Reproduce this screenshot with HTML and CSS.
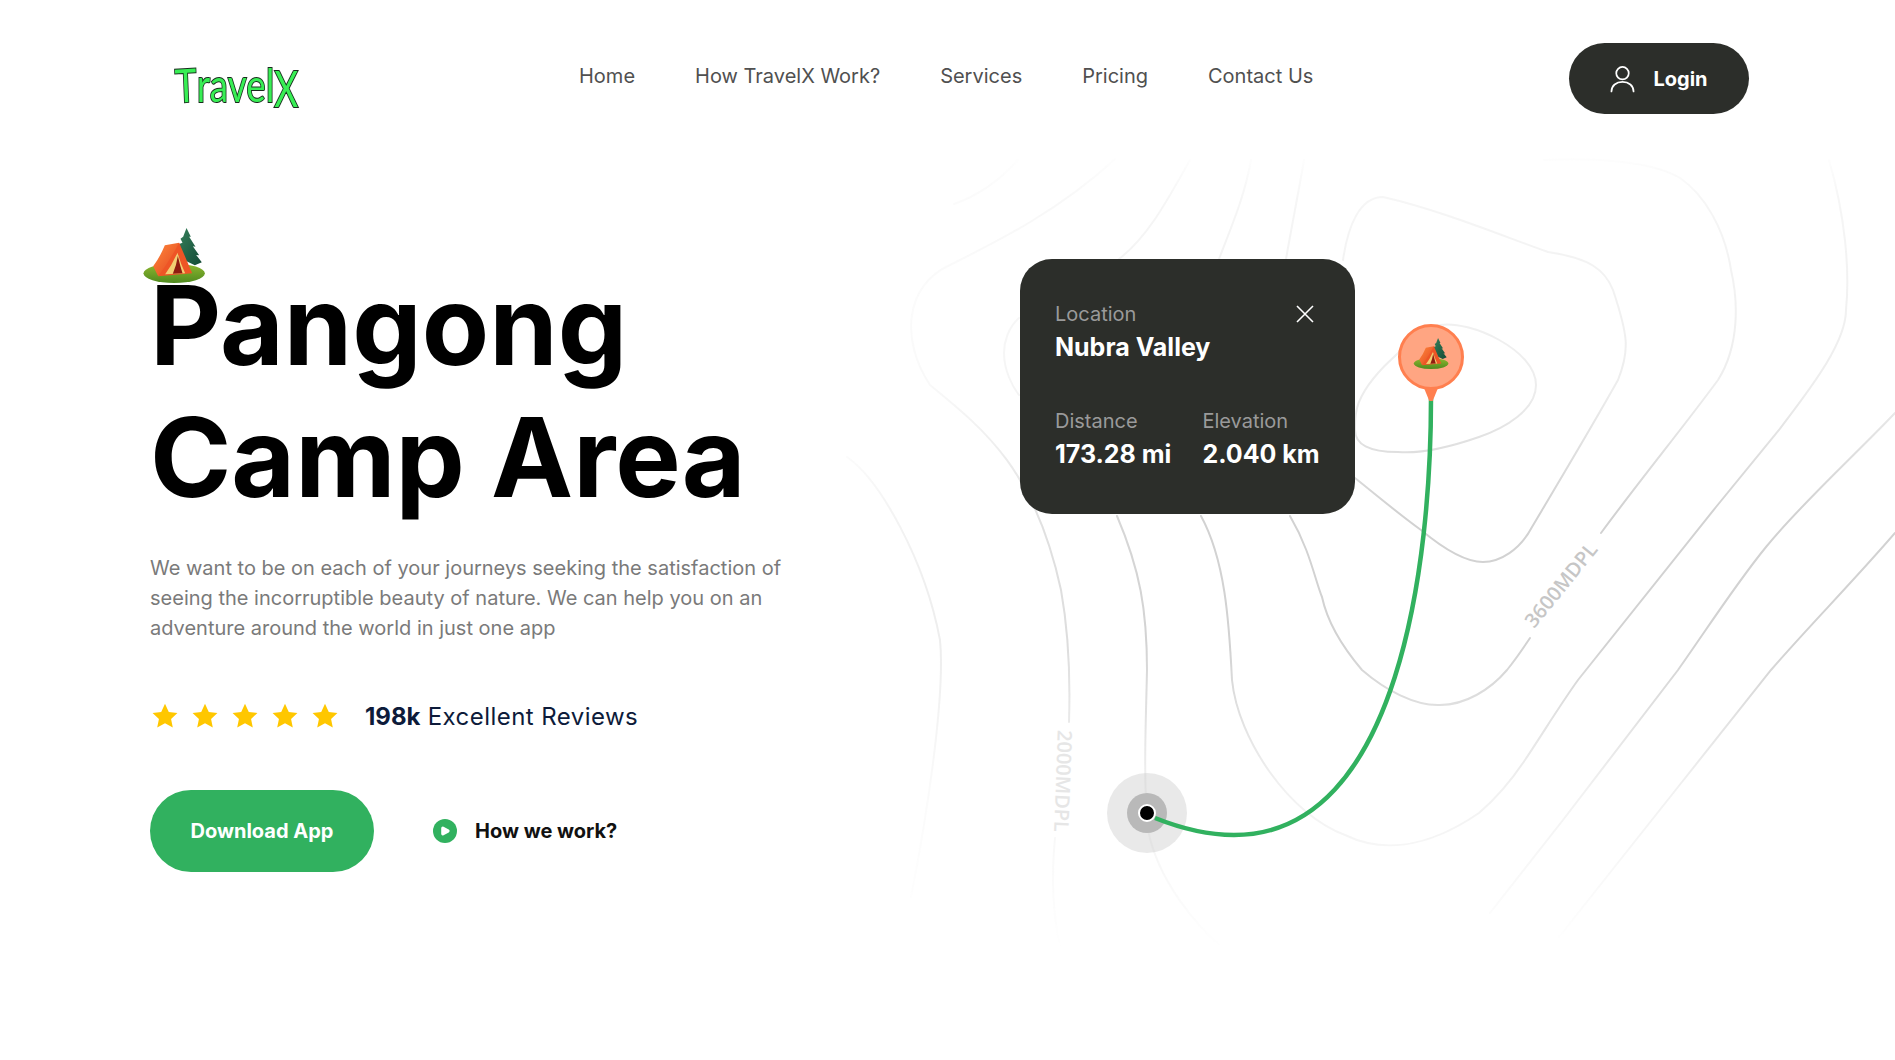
FILE: index.html
```html
<!DOCTYPE html>
<html lang="en">
<head>
<meta charset="utf-8">
<title>TravelX</title>
<link rel="stylesheet" href="styles.css">
</head>
<body>
<svg class="defs" width="0" height="0" aria-hidden="true">
  <defs>
    <linearGradient id="ground" x1="0" y1="0" x2="0" y2="1"><stop offset="0" stop-color="#8fb82f"/><stop offset="1" stop-color="#4f8a1f"/></linearGradient>
    <linearGradient id="tree" x1="0" y1="0" x2="1" y2="1"><stop offset="0" stop-color="#357f5a"/><stop offset="1" stop-color="#134a36"/></linearGradient>
    <linearGradient id="canvas" x1="0" y1="0" x2="1" y2="1"><stop offset="0" stop-color="#ff8a3c"/><stop offset="1" stop-color="#e2421f"/></linearGradient>
    <symbol id="tent" viewBox="40 40 185 165">
      <ellipse cx="133" cy="176" rx="92" ry="29" fill="url(#ground)"/>
      <path d="M170 40L183 66L178 66L197 96L189 95L208 122L199 121L216 143L195 152L150 130L148 88L158 84L152 72L160 66Z" fill="url(#tree)"/>
      <path d="M148 84L105 92Q90 128 70 155L85 185L150 120Z" fill="url(#canvas)"/>
      <path d="M148 84L187 176L85 185Q122 135 148 84Z" fill="#ee5526"/>
      <path d="M143 114Q126 152 106 179L166 176Q152 146 143 114Z" fill="#f2cf73"/>
      <path d="M144 124Q140 152 129 177L158 176Q150 150 144 124Z" fill="#8f1c10"/>
    </symbol>
  </defs>
</svg>

<header class="topbar">
  <a class="logo"><span class="logo-text"><span class="l-t">T</span><span>ravel</span><span class="l-x">X</span></span></a>
  <nav class="nav">
    <a>Home</a>
    <a>How TravelX Work?</a>
    <a>Services</a>
    <a>Pricing</a>
    <a>Contact Us</a>
  </nav>
  <button class="login">
    <svg class="login-icon" viewBox="0 0 26 28" fill="none" stroke="#fff" stroke-width="1.8" stroke-linecap="round"><circle cx="13" cy="8" r="6.5"/><path d="M1.5 27c0-6 5-10 11.500-10s11.500 4 11.500 10"/></svg>
    <span>Login</span>
  </button>
</header>

<main class="hero">
  <section class="copy">
    <svg class="tent-badge"><use href="#tent"/></svg>
    <h1>Pangong<br>Camp Area</h1>
    <p class="lead">We want to be on each of your journeys seeking the satisfaction of seeing the incorruptible beauty of nature. We can help you on an adventure around the world in just one app</p>
    <div class="reviews">
      <div class="stars">
        <svg viewBox="0 0 24 24"><path d="M12 .8l3.500 7.400 8 1-5.900 5.500 1.600 8L12 18.800 4.800 22.700l1.600-8L.5 9.200l8-1z"/></svg>
        <svg viewBox="0 0 24 24"><path d="M12 .8l3.500 7.400 8 1-5.900 5.500 1.600 8L12 18.800 4.800 22.700l1.600-8L.5 9.200l8-1z"/></svg>
        <svg viewBox="0 0 24 24"><path d="M12 .8l3.500 7.400 8 1-5.900 5.500 1.600 8L12 18.800 4.800 22.700l1.600-8L.5 9.200l8-1z"/></svg>
        <svg viewBox="0 0 24 24"><path d="M12 .8l3.500 7.400 8 1-5.900 5.500 1.600 8L12 18.800 4.800 22.700l1.600-8L.5 9.200l8-1z"/></svg>
        <svg viewBox="0 0 24 24"><path d="M12 .8l3.500 7.400 8 1-5.900 5.500 1.600 8L12 18.800 4.800 22.700l1.600-8L.5 9.200l8-1z"/></svg>
      </div>
      <div class="review-text"><b>198k</b> Excellent Reviews</div>
    </div>
    <div class="actions">
      <button class="download">Download App</button>
      <a class="how">
        <svg class="play" viewBox="0 0 24 24"><circle cx="12" cy="12" r="12" fill="#31b15f"/><path d="M9.800 9.200L15 12L9.800 14.800Z" fill="#fff" stroke="#fff" stroke-width="3.200" stroke-linejoin="round"/></svg>
        <span>How we work?</span>
      </a>
    </div>
  </section>

  <section class="map">
    <svg class="contours" viewBox="840 150 1055 800" fill="none" stroke="#d2d2d2" stroke-width="2" stroke-linecap="round">
      <path d="M1356 413C1360 385 1400 345 1440 325C1470 320 1536 350 1536 385C1536 410 1505 428 1479 437C1450 447 1420 454 1398 452C1370 452 1354 445 1355 428C1355 422 1355 418 1356 413Z"/>
      <path d="M1019 318C1008 328 1004 342 1004 353C1004 370 1012 386 1019 395"/>
      <path d="M1355 478C1380 498 1400 515 1421 530C1445 550 1465 562 1483 562C1500 562 1520 550 1532 527C1545 505 1590 430 1618 380C1630 350 1628 335 1613 290C1605 270 1590 258 1548 252C1500 235 1440 210 1383 197C1360 197 1348 225 1343 260"/>
      <path d="M1290 516C1310 550 1315 580 1322 597C1328 625 1345 650 1362 670C1385 690 1415 706 1440 705C1465 705 1490 690 1507 670C1515 660 1522 650 1530 638"/>
      <path d="M1601 533C1640 480 1685 425 1718 380C1740 345 1738 300 1731 270C1725 230 1705 195 1680 178C1650 160 1590 158 1544 160"/>
      <path d="M1201 516C1225 560 1229 620 1232 680C1238 740 1290 815 1345 835C1380 852 1425 850 1479 813C1500 795 1515 775 1525 760C1545 730 1560 705 1578 680L1716 507L1779 430C1805 395 1846 345 1846 310C1850 270 1845 215 1829 160"/>
      <path d="M1117 516C1140 570 1147 610 1147 670C1146 720 1143 780 1148 830C1158 880 1195 925 1225 950"/>
      <path d="M1115 159C1060 210 1000 240 950 265C905 285 900 340 930 385C985 430 1035 470 1061 590C1070 640 1070 690 1069 722"/>
      <path d="M1055 838C1051 880 1053 915 1060 946"/>
      <path d="M847 457C880 480 925 560 940 640C945 690 930 800 911 897"/>
      <path d="M1119 259C1150 235 1170 195 1190 160"/>
      <path d="M1219 259C1232 225 1245 195 1251 160"/>
      <path d="M1286 259C1292 225 1298 195 1304 160"/>
      <path d="M954 204C980 195 1000 180 1018 160"/>
      <path d="M1895 413C1850 460 1800 505 1766 547C1735 585 1705 632 1678 670L1563 820L1490 913"/>
      <path d="M1895 533C1850 585 1810 625 1771 670L1678 787L1559 937"/>
    </svg>
    <span class="tag tag-high">3600MDPL</span>
    <span class="tag tag-low">2000MDPL</span>
    <div class="start"><div class="start-mid"><div class="start-dot"></div></div></div>
    <svg class="route" viewBox="840 150 1055 800" fill="none">
      <path d="M1155 818C1185 830 1210 835 1234 835C1400 835 1431 560 1431 398" stroke="#31b15f" stroke-width="4.500"/>
    </svg>
    <div class="pin"><svg class="pin-tent"><use href="#tent"/></svg></div>
    <div class="pin-tail"></div>
    <article class="card">
      <div class="card-top">
        <div>
          <div class="label">Location</div>
          <div class="value">Nubra Valley</div>
        </div>
        <svg class="close" viewBox="0 0 18 18" fill="none" stroke="#fff" stroke-width="1.600"><path d="M1 1l16 16M17 1L1 17"/></svg>
      </div>
      <div class="card-stats">
        <div><div class="label">Distance</div><div class="value">173.28 mi</div></div>
        <div><div class="label">Elevation</div><div class="value">2.040 km</div></div>
      </div>
    </article>
  </section>
</main>
</body>
</html>
```
FILE: styles.css
```css
* { box-sizing: border-box; }
html, body { margin: 0; padding: 0; }
body {
  width: 1895px;
  height: 1060px;
  overflow: hidden;
  background: #fff;
  font-family: Inter, "Liberation Sans", sans-serif;
  color: #0a0a0a;
}
.defs { position: absolute; }

.topbar {
  display: flex;
  align-items: flex-start;
  height: 150px;
  padding: 43px 146px 0 150px;
}
.logo {
  width: 429px;
  padding: 14px 0 0 25px;
  font-family: Lato, sans-serif;
  font-size: 46px;
  line-height: 56px;
  color: #38ee55;
  -webkit-text-stroke: 2px #17291b;
  paint-order: stroke;
  white-space: nowrap;
}
.logo-text { display: inline-block; transform: scaleX(.8); transform-origin: left center; }
.l-t { display: inline-block; transform: rotate(-3deg); }
.l-x { display: inline-block; transform: translateY(3px) scaleY(1.1); }
.nav {
  display: flex;
  gap: 60px;
  font-size: 20px;
  line-height: 24px;
  color: #505050;
  padding-top: 21px;
}
.login {
  margin-left: auto;
  width: 180px;
  height: 71px;
  border: 0;
  border-radius: 36px;
  background: #2c2e2a;
  color: #fff;
  font: 700 20px Inter, sans-serif;
  display: flex;
  align-items: center;
  justify-content: center;
  gap: 18px;
}
.login-icon { width: 25px; height: 28px; }

.hero { display: flex; height: 800px; }
.copy { position: relative; width: 840px; padding-left: 150px; flex: none; }
.tent-badge { position: absolute; left: 143px; top: 78px; width: 62px; height: 55px; }
h1 {
  margin: 0;
  padding-top: 109px;
  font-size: 110px;
  line-height: 132px;
  font-weight: 700;
  color: #000;
}
.lead {
  margin: 30px 0 0;
  width: 660px;
  font-size: 20px;
  line-height: 30px;
  color: #7a7a7a;
}
.reviews { display: flex; align-items: center; margin-top: 53px; height: 40px; }
.stars { display: flex; gap: 14px; width: 215px; padding-left: 2px; }
.stars svg { width: 26px; height: 26px; fill: #ffc700; flex: none; }
.review-text { font-size: 24px; letter-spacing: .45px; color: #0d1b3a; }
.review-text b { font-weight: 700; letter-spacing: 0; }
.actions { display: flex; align-items: center; margin-top: 54px; gap: 59px; }
.download {
  width: 224px;
  height: 82px;
  border: 0;
  border-radius: 41px;
  background: #31b15f;
  color: #fff;
  font: 700 20px Inter, sans-serif;
}
.how { display: flex; align-items: center; gap: 18px; font-size: 20px; font-weight: 700; color: #111; }
.play { width: 24px; height: 24px; }

.map { position: relative; width: 1055px; height: 800px; flex: none; }
.contours, .route { position: absolute; inset: 0; width: 1055px; height: 800px; }
.contours {
  -webkit-mask-image: linear-gradient(to bottom, transparent 0, rgba(0,0,0,.2) 6%, rgba(0,0,0,.4) 30%, #000 45%, #000 62%, rgba(0,0,0,.3) 80%, transparent 100%), linear-gradient(to right, rgba(0,0,0,.1) 0, #000 30%, #000 100%);
  -webkit-mask-composite: source-in;
  mask-image: linear-gradient(to bottom, transparent 0, rgba(0,0,0,.2) 6%, rgba(0,0,0,.4) 30%, #000 45%, #000 62%, rgba(0,0,0,.3) 80%, transparent 100%), linear-gradient(to right, rgba(0,0,0,.1) 0, #000 30%, #000 100%);
  mask-composite: intersect;
}
.tag { position: absolute; font-family: "Open Sans", sans-serif; font-weight: 600; font-size: 20px; line-height: 24px; white-space: nowrap; }
.tag-high { left: 670px; top: 423px; color: #c6c6c6; transform: rotate(-51deg); }
.tag-low { left: 172px; top: 619px; color: #e6e6e6; transform: rotate(92deg); }
.start {
  position: absolute; left: 267px; top: 623px;
  width: 80px; height: 80px; border-radius: 50%;
  background: rgba(200,200,200,.4);
  display: flex; align-items: center; justify-content: center;
}
.start-mid {
  width: 40px; height: 40px; border-radius: 50%;
  background: #b9b9b9;
  display: flex; align-items: center; justify-content: center;
}
.start-dot { width: 18px; height: 18px; border-radius: 50%; background: #000; border: 2px solid #fff; }
.pin {
  position: absolute; left: 558px; top: 174px;
  width: 66px; height: 66px; border-radius: 50%;
  background: #ffa582; border: 3px solid #ff7f4f;
}
.pin-tent { position: absolute; left: 12px; top: 11px; width: 36px; height: 31px; }
.pin-tail {
  position: absolute; left: 584px; top: 238px;
  width: 14px; height: 13px;
  background: #ff7f4f;
  clip-path: polygon(0 0, 100% 0, 62% 100%, 38% 100%);
}
.card {
  position: absolute; left: 180px; top: 109px;
  width: 335px; height: 255px;
  border-radius: 32px;
  background: #2c2e2a;
  padding: 42px 35px 0;
}
.card-top { display: flex; justify-content: space-between; align-items: flex-start; padding-right: 6px; }
.close { width: 18px; height: 18px; margin-top: 4px; }
.label { font-size: 20px; line-height: 26px; color: #9a9a9a; }
.value { font-size: 25px; line-height: 32px; font-weight: 700; color: #fff; margin-top: 4px; white-space: nowrap; }
.card-stats { display: flex; gap: 31px; margin-top: 45px; }
```
